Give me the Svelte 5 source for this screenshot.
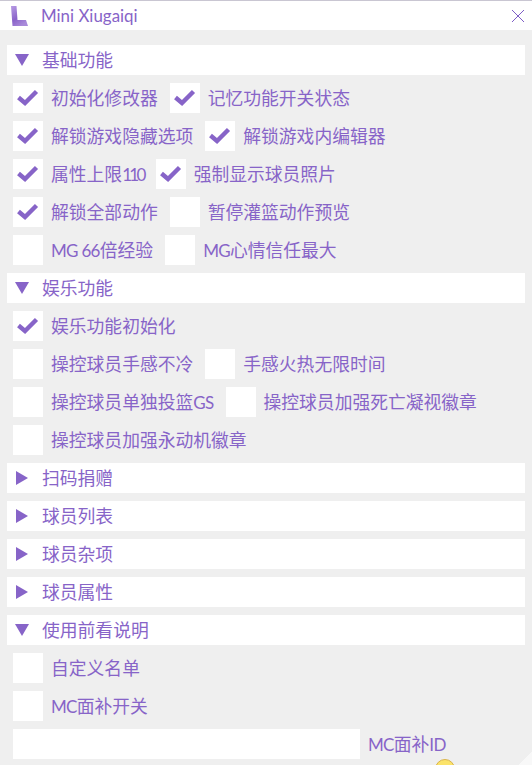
<script>
  const sections = [
    { title: '基础功能', open: true, rows: [
      [['初始化修改器', true], ['记忆功能开关状态', true]],
      [['解锁游戏隐藏选项', true], ['解锁游戏内编辑器', true]],
      [['属性上限110', true], ['强制显示球员照片', true]],
      [['解锁全部动作', true], ['暂停灌篮动作预览', false]],
      [['MG 66倍经验', false], ['MG心情信任最大', false]]
    ]},
    { title: '娱乐功能', open: true, rows: [
      [['娱乐功能初始化', true]],
      [['操控球员手感不冷', false], ['手感火热无限时间', false]],
      [['操控球员单独投篮GS', false], ['操控球员加强死亡凝视徽章', false]],
      [['操控球员加强永动机徽章', false]]
    ]},
    { title: '扫码捐赠', open: false, rows: [] },
    { title: '球员列表', open: false, rows: [] },
    { title: '球员杂项', open: false, rows: [] },
    { title: '球员属性', open: false, rows: [] },
    { title: '使用前看说明', open: true, rows: [
      [['自定义名单', false]],
      [['MC面补开关', false]]
    ]}
  ];

  const parts = (text) => text.split(/([A-Za-z0-9 ]+)/).filter(Boolean);
  const isLatin = (p) => /^[A-Za-z0-9 ]+$/.test(p);
</script>

{#snippet mixed(text)}
  <span class="label">{#each parts(text) as p}{#if isLatin(p)}<span class={/^[0-9]+$/.test(p) ? 'lat num' : 'lat'}>{p}</span>{:else}{p}{/if}{/each}</span>
{/snippet}

<div class="window">
  <header class="titlebar">
    <svg class="logo" viewBox="0 0 17 20" width="17" height="20">
      <defs>
        <linearGradient id="lg" x1="0" y1="0" x2="0.6" y2="1">
          <stop offset="0" stop-color="#b79be4" />
          <stop offset="0.6" stop-color="#8a63c9" />
          <stop offset="1" stop-color="#a98ada" />
        </linearGradient>
      </defs>
      <path d="M0 0 L5.5 0 L6.5 14 L15 14 L17 20 L1.5 20 Z" fill="url(#lg)" />
    </svg>
    <span class="title">Mini Xiugaiqi</span>
    <svg class="close" viewBox="0 0 14 14" width="14" height="14">
      <path d="M1 1 L13 13 M13 1 L1 13" stroke="#7d5cc6" stroke-width="1" fill="none" />
    </svg>
  </header>

  <main class="body">
    {#each sections as s}
      <div class="section-head">
        <span class={s.open ? 'tri down' : 'tri right'}></span>
        <span class="label">{s.title}</span>
      </div>
      {#each s.rows as row}
        <div class="row">
          {#each row as [text, on]}
            <span class="item">
              <span class="box">
                {#if on}
                  <svg viewBox="0 0 22 18" width="22" height="18">
                    <path d="M1.5 8.5 L8 14 L19.5 2.5" stroke="#8764c8" stroke-width="4.4" fill="none" />
                  </svg>
                {/if}
              </span>
              {@render mixed(text)}
            </span>
          {/each}
        </div>
      {/each}
    {/each}
    <div class="row">
      <span class="item">
        <span class="input"></span>
        {@render mixed('MC面补ID')}
      </span>
    </div>
  </main>

  <span class="chick"></span>
  <span class="grip"></span>
</div>

<style>
  :global(body) {
    margin: 0;
    background: #efefef;
    overflow: hidden;
  }
  .window {
    position: relative;
    width: 532px;
    height: 765px;
    overflow: hidden;
    background: #efefef;
    color: #8764c8;
    font-family: "Lato", "Noto Sans CJK SC", sans-serif;
    font-size: 17.8px;
    line-height: 30px;
  }
  .lat {
    font-size: 17px;
    letter-spacing: -0.7px;
  }
  .lat.num {
    letter-spacing: -2.7px;
  }
  .titlebar {
    box-sizing: border-box;
    height: 30px;
    background: #fff;
    border-top: 1px solid #c9c6d2;
    display: flex;
    align-items: center;
    padding: 0 7px 0 11px;
  }
  .logo { flex: none; }
  .title {
    margin-left: 13px;
    font-size: 16.9px;
    flex: 1;
  }
  .close { flex: none; }
  .body {
    padding: 15px 7px 0 7px;
    display: flex;
    flex-direction: column;
    gap: 8px;
  }
  .section-head {
    height: 30px;
    background: #fff;
    display: flex;
    align-items: center;
  }
  .tri {
    flex: none;
    width: 0;
    height: 0;
  }
  .tri.down {
    border-left: 7px solid transparent;
    border-right: 7px solid transparent;
    border-top: 12px solid #8764c8;
    margin-left: 8px;
    margin-right: 13px;
  }
  .tri.right {
    border-top: 7px solid transparent;
    border-bottom: 7px solid transparent;
    border-left: 12px solid #8764c8;
    margin-left: 9px;
    margin-right: 14px;
  }
  .row {
    display: flex;
    gap: 12px;
    padding-left: 6px;
    height: 30px;
  }
  .item {
    display: flex;
    align-items: center;
    gap: 8px;
  }
  .box {
    width: 30px;
    height: 30px;
    background: #fff;
    display: flex;
    align-items: center;
    justify-content: center;
  }
  .input {
    width: 347px;
    height: 30px;
    background: #fff;
  }
  .chick {
    position: absolute;
    left: 435px;
    top: 759px;
    width: 20px;
    height: 20px;
    border-radius: 50%;
    background: #fbe36a;
    border: 1px solid #d9b34a;
    box-sizing: border-box;
  }
  .grip {
    position: absolute;
    right: 0;
    bottom: 0;
    width: 14px;
    height: 14px;
    background: linear-gradient(135deg, transparent 50%, #f8f8f8 50%);
  }
</style>
